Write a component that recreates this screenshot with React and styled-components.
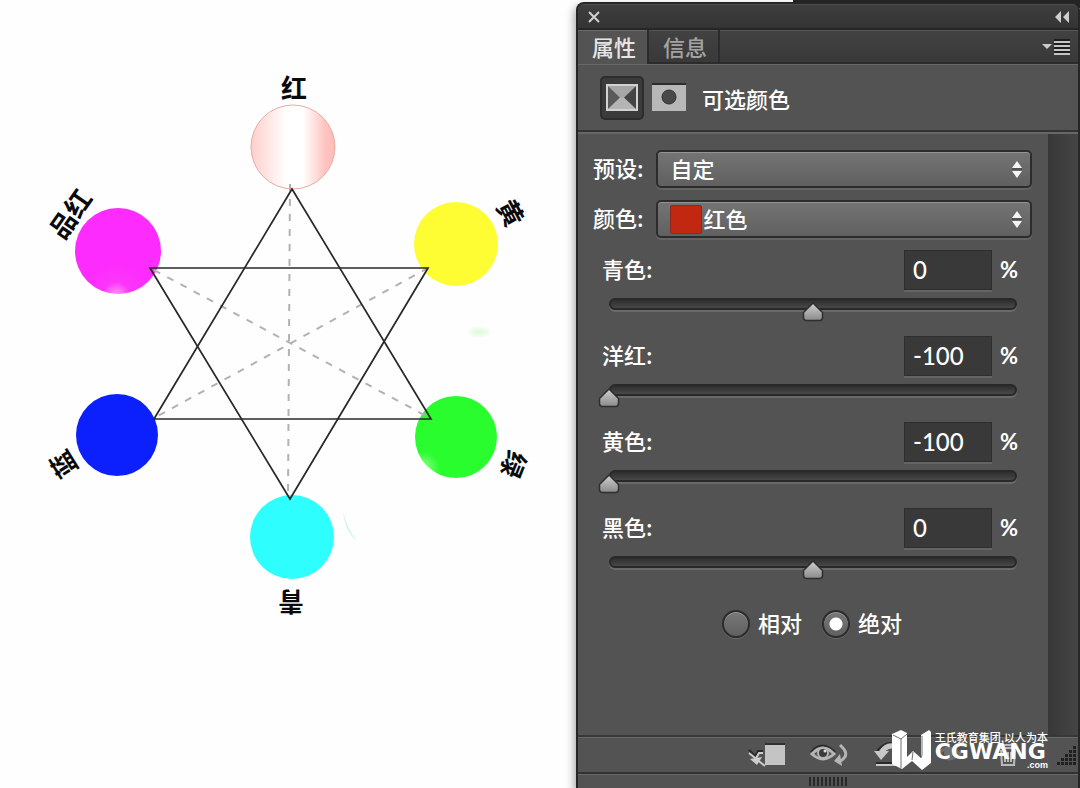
import React, { useState } from 'react';
import styled, { createGlobalStyle } from 'styled-components';

const GlobalStyle = createGlobalStyle`
    * {
        box-sizing: border-box;
    }
    body {
        margin: 0;
        background: #fefefe;
        color: #fff;
        font-family: 'Noto Sans CJK SC', sans-serif;
        font-size: 22px;
        line-height: 32px;
    }
    button, input, select {
        margin: 0;
        padding: 0;
        border: 0;
        color: inherit;
        font: inherit;
    }
`;

const Page = styled.div`
    display: grid;
    grid-template-columns: 8fr 7fr;
    min-height: 100vh;
`;

const Canvas = styled.main`
    min-width: 0;
    overflow: hidden;
`;

const Drawing = styled.svg`
    display: block;
    width: 100%;
    height: auto;
`;

const DiagramLabel = styled.text`
    fill: #0a0a0a;
    font-size: 26px;
    font-weight: 700;
    text-anchor: middle;
    dominant-baseline: central;
`;

const Side = styled.div`
    display: flex;
    flex-direction: column;
    padding-top: 2px;
    background: linear-gradient(90deg, transparent 43%, #252525 43%) top / 100% 8px no-repeat;
`;

const Panel = styled.aside`
    flex: 1;
    display: flex;
    flex-direction: column;
    border: 2px solid #262626;
    border-bottom: 0;
    border-radius: 8px 8px 0 0;
    background: #535353;
    box-shadow: -2px 4px 8px rgba(0, 0, 0, 0.35);
    overflow: hidden;
`;

const TitleBar = styled.div`
    display: flex;
    align-items: center;
    justify-content: space-between;
    height: 26px;
    padding: 0 8px 0 10px;
    border-top: 1px solid #4c4c4c;
    border-bottom: 2px solid #262626;
    background: linear-gradient(#3e3e3e, #343434);
`;

const IconButton = styled.button`
    display: flex;
    background: none;
    cursor: pointer;
`;

const Tabs = styled.div`
    display: flex;
    height: 34px;
    background: linear-gradient(#424242, #383838);
    box-shadow: inset 0 1px #555, inset 0 -2px #2c2c2c;
`;

const Tab = styled.button`
    height: 34px;
    padding: 0 11px 2px 14px;
    border-right: 2px solid #2b2b2b;
    background: ${({ $active }) => ($active ? '#535353' : 'transparent')};
    color: ${({ $active }) => ($active ? '#e6e6e6' : '#a3a3a3')};
    font-weight: 500;
    box-shadow: ${({ $active }) => ($active ? 'inset 0 1px #6a6a6a' : 'none')};
    cursor: pointer;
`;

const MenuButton = styled(IconButton)`
    align-items: center;
    margin-left: auto;
    padding-right: 7px;
`;

const Header = styled.header`
    display: flex;
    align-items: center;
    gap: 3px;
    height: 68px;
    padding-left: 22px;
    border-top: 1px solid #696969;
    border-bottom: 2px solid #333;
`;

const ModeButton = styled(IconButton)`
    align-items: center;
    justify-content: center;
    width: 44px;
    height: 44px;
    border: 2px solid ${({ $pressed }) => ($pressed ? '#2d2d2d' : 'transparent')};
    border-radius: 5px;
    background: ${({ $pressed }) => ($pressed ? '#3b3b3b' : 'transparent')};
`;

const Title = styled.h1`
    margin: 0;
    padding-left: 8px;
    font-size: 22px;
    font-weight: 500;
`;

const Body = styled.div`
    flex: 1;
    display: flex;
    border-top: 2px solid #676767;
`;

const Form = styled.form`
    flex: 1;
    padding: 16px 16px 0 15px;
`;

const ScrollTrack = styled.div`
    width: 30px;
    background: linear-gradient(90deg, #383838, #454545);
`;

const SelectRow = styled.div`
    display: flex;
    align-items: center;
    gap: 12px;
    margin-bottom: 12px;
    font-weight: 500;
`;

const Label = styled.label`
    padding-bottom: 5px;
`;

const SelectBox = styled.div`
    position: relative;
    flex: 1;
    height: 38px;
`;

const Select = styled.select`
    width: 100%;
    height: 38px;
    padding: 0 40px 6px ${({ $swatch }) => ($swatch ? '46px' : '13px')};
    appearance: none;
    border: 2px solid #2c2c2c;
    border-radius: 5px;
    background: linear-gradient(#747474, #606060);
    box-shadow: inset 0 1px #949494, 0 2px #646464;
    font-weight: 500;
`;

const Arrows = styled.svg`
    position: absolute;
    top: 10px;
    right: 9px;
    pointer-events: none;
`;

const Swatch = styled.span`
    position: absolute;
    top: 5px;
    left: 14px;
    width: 32px;
    height: 29px;
    border: 1px solid #8b2a1c;
    border-radius: 2px;
    background: #c22711;
    pointer-events: none;
`;

const Sliders = styled.div`
    display: flex;
    flex-direction: column;
    gap: 26px;
    padding: 0 15px 0 9px;
`;

const FieldHead = styled.div`
    display: flex;
    align-items: center;
    height: 40px;
    font-weight: 500;
`;

const Value = styled.input`
    width: 88px;
    height: 40px;
    margin: 0 8px 0 auto;
    padding: 0 8px 1px;
    border: 1px solid #2e2e2e;
    background: #393939;
    box-shadow: 0 2px #646464;
    font-family: Lato, 'Noto Sans CJK SC', sans-serif;
    font-size: 24px;
`;

const Unit = styled.span`
    width: 17px;
    font-family: Lato, sans-serif;
    font-weight: 700;
`;

const Track = styled.div`
    height: 12px;
    margin: 8px 0 0 7px;
    border: 2px solid #292929;
    border-radius: 6px;
    background: linear-gradient(#2e2e2e, #484848);
    box-shadow: 0 2px #6a6a6a;
`;

const thumb = `url("data:image/svg+xml,%3Csvg xmlns='http://www.w3.org/2000/svg' width='22' height='20'%3E%3Cdefs%3E%3ClinearGradient id='g' x2='0' y2='1'%3E%3Cstop stop-color='%23d0d0d0'/%3E%3Cstop offset='1' stop-color='%238a8a8a'/%3E%3C/linearGradient%3E%3C/defs%3E%3Cpath d='M11 1 20.5 10.5V15.5Q20.5 18.5 17.5 18.5H4.5Q1.5 18.5 1.5 15.5V10.5Z' fill='url(%23g)' stroke='%232f2f2f' stroke-width='1.5'/%3E%3C/svg%3E")`;

const Range = styled.input`
    display: block;
    width: calc(100% + 26px);
    height: 20px;
    margin: 2px -13px 0;
    appearance: none;
    background: none;

    &::-webkit-slider-thumb {
        width: 22px;
        height: 20px;
        appearance: none;
        background: ${thumb} center no-repeat;
    }
`;

const RadioRow = styled.div`
    display: flex;
    justify-content: center;
    gap: 20px;
    margin-top: 38px;
    padding-right: 1px;
`;

const RadioLabel = styled.label`
    display: flex;
    align-items: center;
    gap: 8px;
    font-weight: 500;

    span {
        padding-bottom: 4px;
    }
`;

const Radio = styled.input`
    width: 28px;
    height: 28px;
    appearance: none;
    border: 2px solid #2c2c2c;
    border-radius: 50%;
    background: linear-gradient(#787878, #606060);
    box-shadow: inset 0 1px #999, 0 1px #6a6a6a;

    &:checked {
        background: radial-gradient(circle, #fff 6px, transparent 7px), linear-gradient(#787878, #606060);
    }
`;

const Footer = styled.footer`
    position: relative;
    display: flex;
    align-items: center;
    justify-content: flex-end;
    gap: 25px;
    height: 39px;
    border-top: 2px solid #383838;
    border-bottom: 2px solid #333;
    box-shadow: inset 0 1px #696969;
`;

const Grip = styled.div`
    display: flex;
    justify-content: center;
    height: 14px;
    padding-top: 2px;
    border-top: 1px solid #696969;
`;

const GripLines = styled.div`
    width: 39px;
    height: 9px;
    background: repeating-linear-gradient(90deg, #292929 0 2px, #535353 2px 4px);
`;

const Watermark = styled.div`
    position: absolute;
    right: 30px;
    bottom: 1px;
    display: flex;
    align-items: center;
    gap: 3px;
    pointer-events: none;
`;

const Slogan = styled.div`
    font-size: 11px;
    font-weight: 500;
    line-height: 12px;
    white-space: nowrap;
`;

const Brand = styled.div`
    font-family: 'DejaVu Sans', sans-serif;
    font-size: 22px;
    font-weight: 700;
    line-height: 18px;
`;

const Domain = styled.div`
    font-family: 'Liberation Sans', sans-serif;
    font-size: 9px;
    font-weight: 700;
    line-height: 9px;
    text-align: right;
`;

const labels = [
    { text: '红', x: 294, y: 86, angle: 0 },
    { text: '黄', x: 512, y: 212, angle: 62 },
    { text: '绿', x: 515, y: 465, angle: 112 },
    { text: '青', x: 291, y: 603, angle: 180 },
    { text: '蓝', x: 62, y: 465, angle: 238 },
    { text: '品红', x: 69, y: 213, angle: -55 },
];

function ColorStar() {
    return (
        <Drawing viewBox="0 0 576 788" role="img" aria-label="色相关系图">
            <defs>
                <linearGradient id="red">
                    <stop offset="0" stopColor="#ffcfcb" />
                    <stop offset=".2" stopColor="#ffe6e4" />
                    <stop offset=".42" stopColor="#fff" />
                    <stop offset=".62" stopColor="#fff" />
                    <stop offset=".88" stopColor="#ffc4c0" />
                    <stop offset="1" stopColor="#ffbcb7" />
                </linearGradient>
                <radialGradient id="magenta" cx=".48" cy="1.02" r=".4">
                    <stop offset="0" stopColor="#ff9cf5" />
                    <stop offset=".4" stopColor="#fd35fb" />
                    <stop offset="1" stopColor="#fd2bfd" />
                </radialGradient>
                <radialGradient id="green" cx=".1" cy=".88" r=".2">
                    <stop offset="0" stopColor="#8fff8a" />
                    <stop offset="1" stopColor="#29fd2e" />
                </radialGradient>
                <radialGradient id="haze">
                    <stop offset="0" stopColor="#d5fdd0" />
                    <stop offset="1" stopColor="#d5fdd0" stopOpacity="0" />
                </radialGradient>
            </defs>
            <circle cx="293" cy="147" r="42" fill="url(#red)" stroke="#e8aaa2" />
            <circle cx="118" cy="251" r="43" fill="url(#magenta)" />
            <circle cx="456" cy="244" r="42" fill="#fefd34" />
            <circle cx="117" cy="435" r="41" fill="#0b20fc" />
            <circle cx="456" cy="437" r="41" fill="url(#green)" />
            <circle cx="292" cy="537" r="42" fill="#2efefe" />
            <g fill="none" stroke="#b2b2b2" strokeWidth="2" strokeDasharray="7 8">
                <path d="M290 184 288 498" />
                <path d="M154 270 430 418" />
                <path d="M428 268 156 417" />
            </g>
            <g fill="none" stroke="#282828" strokeWidth="1.7">
                <path d="M292 189 431 419H154Z" />
                <path d="M150 268H428L290 499Z" />
            </g>
            <ellipse cx="479" cy="332" rx="13" ry="6" fill="url(#haze)" />
            <path d="M343 511Q347 529 357 541Q345 532 343 511" fill="#c9f7e5" />
            {labels.map(({ text, x, y, angle }) => (
                <DiagramLabel key={text} transform={`translate(${x} ${y}) rotate(${angle})`}>
                    {text}
                </DiagramLabel>
            ))}
        </Drawing>
    );
}

function SelectArrows() {
    return (
        <Arrows width="12" height="20" viewBox="0 0 12 20">
            <path d="M6 1 11 8H1ZM1 11h10L6 18Z" fill="#f5f5f5" />
            <path d="M1 9h10" stroke="#3b3b3b" />
        </Arrows>
    );
}

function SliderField({ id, label, initial }) {
    const [value, setValue] = useState(initial);
    const change = (e) => setValue(e.target.value);
    return (
        <div>
            <FieldHead>
                <Label htmlFor={id}>{label}:</Label>
                <Value id={id} value={value} onChange={change} />
                <Unit>%</Unit>
            </FieldHead>
            <Track>
                <Range type="range" min="-100" max="100" value={value} onChange={change} aria-label={label} />
            </Track>
        </div>
    );
}

function FooterIcons() {
    return (
        <>
            <IconButton type="button" aria-label="剪切到图层">
                <svg width="38" height="28" viewBox="-2 0 38 28" fill="none">
                    <path d="M16 3h20" stroke="#303030" strokeWidth="2" />
                    <path d="M16 4h20v20H16Z" fill="#c4c4c4" />
                    <path d="M14 10H9L6 16M0 9l7 7" stroke="#292929" strokeWidth="2" />
                    <path d="M14 12h-4L6 19M0 12l16 13" stroke="#ccc" strokeWidth="2" />
                    <path d="M1 18 13 16 8 24Z" fill="#ccc" />
                </svg>
            </IconButton>
            <IconButton type="button" aria-label="查看上一状态">
                <svg width="38" height="28" viewBox="0 0 38 28" fill="none">
                    <path d="M1 11Q12-2 25 11" stroke="#2c2c2c" strokeWidth="2" />
                    <path d="M2 13Q13 1 24 13Q13 23 2 13Z" stroke="#b5b5b5" strokeWidth="3" />
                    <circle cx="13" cy="12" r="6" fill="#b5b5b5" />
                    <circle cx="13" cy="12" r="4" fill="#3b3b3b" />
                    <circle cx="15" cy="10" r="1.5" fill="#ddd" />
                    <path d="M30 4Q39 12 34 17 32 20 29 20" stroke="#b5b5b5" strokeWidth="3" />
                    <path d="m30 13-6 7 8 5Z" fill="#b5b5b5" />
                </svg>
            </IconButton>
            <IconButton type="button" aria-label="复位">
                <svg width="34" height="28" viewBox="0 0 34 28" fill="none">
                    <path d="M4 10Q18-6 28 10" stroke="#2c2c2c" strokeWidth="2" />
                    <path d="M7 13Q14 2 23 6Q29 10 24 18" stroke="#c8c8c8" strokeWidth="5" />
                    <path d="M1 10h15L8 19Z" fill="#c8c8c8" />
                    <path d="M3 22h24" stroke="#292929" strokeWidth="2" />
                    <path d="M3 24h24" stroke="#c8c8c8" strokeWidth="2" />
                </svg>
            </IconButton>
            <IconButton type="button" aria-label="切换可见性">
                <svg width="38" height="28" viewBox="0 0 38 28" fill="none">
                    <path d="M6 13Q17 1 28 13Q17 23 6 13Z" stroke="#6f6f6f" strokeWidth="3" />
                    <circle cx="17" cy="12" r="5" fill="#6f6f6f" />
                </svg>
            </IconButton>
            <IconButton type="button" aria-label="删除">
                <svg width="24" height="28" viewBox="0 0 24 28" fill="none" stroke="#bbb" strokeWidth="2">
                    <path d="M4 7h18M9 7V4h8v3M6 9l1 15h12l1-15M10 11v10M13 11v10M16 11v10" />
                </svg>
            </IconButton>
            <svg width="34" height="28" viewBox="0 0 34 28">
                {[0, 1, 2, 3, 4].map((row) =>
                    Array.from({ length: row + 1 }, (_, i) => (
                        <path key={`${row}${i}`} d={`M${29 - i * 4} ${5 + row * 4}h3v3h-3Z`} fill="#202020" />
                    ))
                )}
            </svg>
        </>
    );
}

function App() {
    const [tab, setTab] = useState('属性');
    const [method, setMethod] = useState('绝对');

    return (
        <>
            <GlobalStyle />
            <Page>
                <Canvas>
                    <ColorStar />
                </Canvas>
                <Side>
                    <Panel>
                        <TitleBar>
                            <IconButton aria-label="关闭">
                                <svg width="12" height="12" viewBox="0 0 12 12">
                                    <path d="m1 1 10 10M11 1 1 11" stroke="#d0d0d0" strokeWidth="2" />
                                </svg>
                            </IconButton>
                            <IconButton aria-label="折叠">
                                <svg width="16" height="12" viewBox="0 0 16 12" fill="#cfcfcf">
                                    <path d="M7 0v12L1 6ZM15 0v12L9 6Z" />
                                </svg>
                            </IconButton>
                        </TitleBar>
                        <Tabs>
                            {['属性', '信息'].map((name) => (
                                <Tab key={name} $active={tab === name} onClick={() => setTab(name)}>
                                    {name}
                                </Tab>
                            ))}
                            <MenuButton aria-label="面板菜单">
                                <svg width="30" height="18" viewBox="0 0 30 18">
                                    <path d="M1 6h10L6 11Z" fill="#ccc" />
                                    <path d="M13 2h16M13 6h16M13 10h16M13 14h16" stroke="#1d1d1d" strokeWidth="2" />
                                    <path d="M13 4h16M13 8h16M13 12h16M13 16h16" stroke="#c4c4c4" strokeWidth="2" />
                                </svg>
                            </MenuButton>
                        </Tabs>
                        <Header>
                            <ModeButton $pressed aria-label="调整">
                                <svg width="32" height="27" viewBox="0 0 32 27">
                                    <path d="M0 0h32v27H0Z" fill="#d2d2d2" />
                                    <path d="M2 2h28L18 13.5 30 25H2L14 13.5Z" fill="#a6a6a6" />
                                    <path d="M2 25h28L18 13.5H14Z" fill="#b5b5b5" />
                                    <path d="M2 2v23L14 13.5Z" fill="#5a5a5a" />
                                    <path d="M30 2v23L18 13.5Z" fill="#444" />
                                </svg>
                            </ModeButton>
                            <ModeButton aria-label="蒙版">
                                <svg width="34" height="32" viewBox="0 0 34 32">
                                    <path d="M0 1h34v3H0Z" fill="#2d2d2d" />
                                    <path d="M0 3h34v26H0Z" fill="#b8b8b8" />
                                    <circle cx="17" cy="15" r="7" fill="#494949" stroke="#303030" />
                                </svg>
                            </ModeButton>
                            <Title>可选颜色</Title>
                        </Header>
                        <Body>
                            <Form>
                                <SelectRow>
                                    <Label htmlFor="preset">预设:</Label>
                                    <SelectBox>
                                        <Select id="preset">
                                            <option>自定</option>
                                        </Select>
                                        <SelectArrows />
                                    </SelectBox>
                                </SelectRow>
                                <SelectRow>
                                    <Label htmlFor="color">颜色:</Label>
                                    <SelectBox>
                                        <Select id="color" $swatch>
                                            <option>红色</option>
                                        </Select>
                                        <Swatch />
                                        <SelectArrows />
                                    </SelectBox>
                                </SelectRow>
                                <Sliders>
                                    <SliderField id="cyan" label="青色" initial={0} />
                                    <SliderField id="magenta-value" label="洋红" initial={-100} />
                                    <SliderField id="yellow" label="黄色" initial={-100} />
                                    <SliderField id="black" label="黑色" initial={0} />
                                </Sliders>
                                <RadioRow>
                                    {['相对', '绝对'].map((name) => (
                                        <RadioLabel key={name}>
                                            <Radio
                                                type="radio"
                                                name="method"
                                                checked={method === name}
                                                onChange={() => setMethod(name)}
                                            />
                                            <span>{name}</span>
                                        </RadioLabel>
                                    ))}
                                </RadioRow>
                            </Form>
                            <ScrollTrack />
                        </Body>
                        <Footer>
                            <FooterIcons />
                            <Watermark>
                                <svg width="41" height="42" viewBox="0 0 41 42">
                                    <path
                                        d="M1 5 10 1 16 4V28L22 22 30 29V6L38 1 40 3V34L31 41 21 32 11 40 1 35Z"
                                        fill="#fff"
                                    />
                                    <path d="m2 6 8 4 6-5M10 10v29M31 7v19l-1 3M22 23l-1 8" fill="none" stroke="#707070" />
                                </svg>
                                <div>
                                    <Slogan>王氏教育集团,以人为本</Slogan>
                                    <Brand>CGWANG</Brand>
                                    <Domain>.com</Domain>
                                </div>
                            </Watermark>
                        </Footer>
                        <Grip>
                            <GripLines />
                        </Grip>
                    </Panel>
                </Side>
            </Page>
        </>
    );
}

export default App;
